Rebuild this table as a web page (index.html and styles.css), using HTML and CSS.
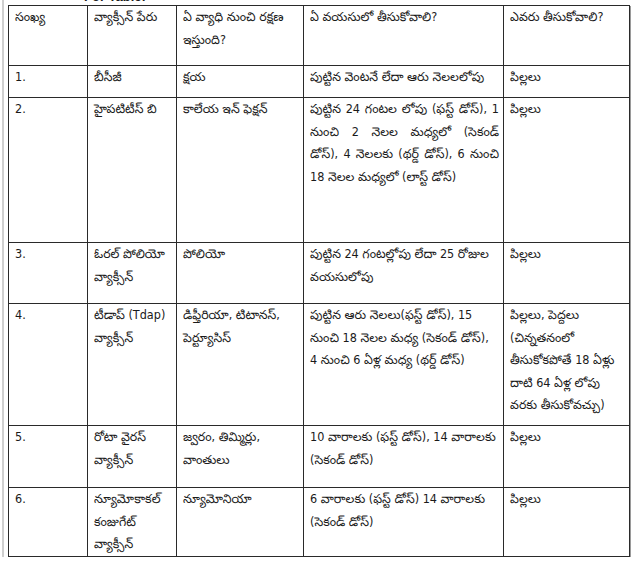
FILE: index.html
```html
<!DOCTYPE html>
<html lang="te">
<head>
<meta charset="utf-8">
<title>For Table</title>
<link rel="stylesheet" href="styles.css">
</head>
<body>
<div class="page">
  <p class="caption">For Table:</p>
  <table class="vax">
    <colgroup>
      <col class="c1"><col class="c2"><col class="c3"><col class="c4"><col class="c5">
    </colgroup>
    <tr class="r-head">
      <td>సంఖ్య</td>
      <td>వ్యాక్సీన్ పేరు</td>
      <td>ఏ వ్యాధి నుంచి రక్షణ ఇస్తుంది?</td>
      <td>ఏ వయసులో తీసుకోవాలి?</td>
      <td>ఎవరు తీసుకోవాలి?</td>
    </tr>
    <tr class="r1">
      <td>1.</td>
      <td>బీసీజీ</td>
      <td>క్షయ</td>
      <td>పుట్టిన వెంటనే లేదా ఆరు నెలలలోపు</td>
      <td>పిల్లలు</td>
    </tr>
    <tr class="r2">
      <td>2.</td>
      <td>హైపటిటీస్ బి</td>
      <td>కాలేయ ఇన్ ఫెక్షన్</td>
      <td class="just">పుట్టిన 24 గంటల లోపు (ఫస్ట్ డోస్), 1 నుంచి 2 నెలల మధ్యలో (సెకండ్ డోస్),&nbsp;4 నెలలకు (థర్డ్ డోస్), 6 నుంచి 18 నెలల మధ్యలో (లాస్ట్ డోస్)</td>
      <td>పిల్లలు</td>
    </tr>
    <tr class="r3">
      <td>3.</td>
      <td>ఓరల్ పోలియో వ్యాక్సీన్</td>
      <td>పోలియో</td>
      <td>పుట్టిన 24 గంటల్లోపు లేదా 25 రోజుల వయసులోపు</td>
      <td>పిల్లలు</td>
    </tr>
    <tr class="r4">
      <td>4.</td>
      <td>టీడాప్ (Tdap) వ్యాక్సీన్</td>
      <td>డిఫ్తీరియా, టిటానస్, పెర్ట్యూసిస్</td>
      <td>పుట్టిన ఆరు నెలలు(ఫస్ట్ డోస్), 15 నుంచి 18 నెలల మధ్య (సెకండ్ డోస్), 4 నుంచి 6 ఏళ్ల మధ్య (థర్డ్ డోస్)</td>
      <td>పిల్లలు, పెద్దలు (చిన్నతనంలో తీసుకోకపోతే 18 ఏళ్లు దాటి 64 ఏళ్ల లోపు వరకు తీసుకోవచ్చు)</td>
    </tr>
    <tr class="r5">
      <td>5.</td>
      <td>రోటా వైరస్ వ్యాక్సీన్</td>
      <td>జ్వరం, తిమ్మిర్లు, వాంతులు</td>
      <td>10 వారాలకు (ఫస్ట్ డోస్), 14 వారాలకు (సెకండ్ డోస్)</td>
      <td>పిల్లలు</td>
    </tr>
    <tr class="r6">
      <td>6.</td>
      <td>న్యూమోకాకల్ కంజుగేట్ వ్యాక్సీన్</td>
      <td>న్యూమోనియా</td>
      <td>6 వారాలకు (ఫస్ట్ డోస్) 14 వారాలకు (సెకండ్ డోస్)</td>
      <td>పిల్లలు</td>
    </tr>
  </table>
</div>
</body>
</html>
```

FILE: styles.css
```css
html, body {
  margin: 0;
  padding: 0;
  background: #ffffff;
}

body {
  font-family: "DejaVu Sans Condensed", "Noto Sans Telugu", "Noto Sans", sans-serif;
  font-size: 12.5px;
  color: #1a1a1a;
}

.page {
  border-left: 2px solid #cfcfcf;
  margin-left: 2px;
  min-height: 562px;
  padding-left: 4px;
  padding-top: 0;
  box-sizing: border-box;
}

.caption {
  margin: -11px 0 0 76px;
  height: 16px;
  font-family: "Liberation Sans", Arial, sans-serif;
  font-weight: bold;
  font-size: 13px;
  line-height: 16px;
}

.vax {
  border-collapse: collapse;
  table-layout: fixed;
  width: 621px;
  box-shadow: 1px 1px 0 #9a9a9a;
}

.vax td {
  border: 1px solid #2a2a2a;
  vertical-align: top;
  padding: 0 4px 0 6px;
  line-height: 22.5px;
  overflow: hidden;
}

.c1 { width: 79px; }
.c2 { width: 89px; }
.c3 { width: 127px; }
.c4 { width: 200px; }
.c5 { width: 126px; }

.just { text-align: justify; }

.r-head { height: 60px; }
.r1 { height: 32px; }
.r2 { height: 145px; }
.r3 { height: 61px; }
.r4 { height: 122px; }
.r5 { height: 62px; }
.r6 { height: 67px; }
```
